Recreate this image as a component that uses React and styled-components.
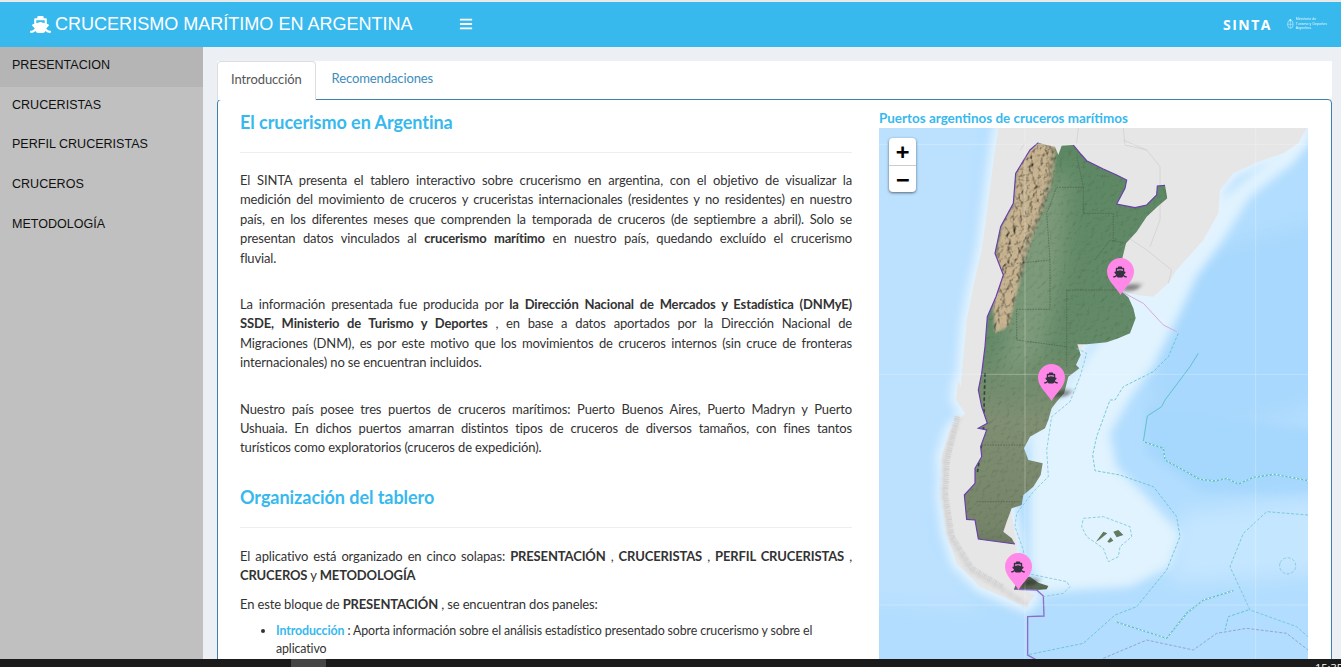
import React from 'react';
import styled, { createGlobalStyle } from 'styled-components';
import { FaShip, FaBars } from 'react-icons/fa';

const GlobalStyle = createGlobalStyle`
  html, body {
    margin: 0;
    padding: 0;
    height: 100%;
    overflow: hidden;
    background: #fff;
  }
  * { box-sizing: border-box; }
`;

const Page = styled.div`
  height: 667px;
  display: flex;
  flex-direction: column;
  padding-top: 2px;
  background: #e9e9e9;
  overflow: hidden;
`;

const Header = styled.header`
  height: 45px;
  flex: none;
  background: #37b9ee;
  color: #fff;
  display: flex;
  align-items: center;
  padding: 0 14px 1px 30px;
`;

const Brand = styled.div`
  display: flex;
  align-items: center;
  gap: 4px;
  font: 18.05px "Liberation Sans", Arial, sans-serif;
  svg { font-size: 21px; }
`;

const Burger = styled.span`
  display: flex;
  margin-left: 46px;
  font-size: 14px;
`;

const HeaderRight = styled.div`
  margin-left: auto;
  display: flex;
  align-items: center;
  gap: 15px;
`;

const Sinta = styled.span`
  font: bold 14px "Open Sans", sans-serif;
  letter-spacing: 1.5px;
`;

const Ministry = styled.div`
  display: flex;
  align-items: center;
  gap: 2px;
  width: 40px;
`;

const MinistryText = styled.div`
  font: 3.6px/4.5px "Liberation Sans", sans-serif;
  white-space: nowrap;
  opacity: 0.85;
`;

const Body = styled.div`
  flex: 1;
  min-height: 0;
  display: flex;
  overflow: hidden;
`;

const Sidebar = styled.nav`
  width: 203px;
  flex: none;
  background: #c0c0c0;
`;

const SideItem = styled.div`
  height: 39.6px;
  padding: 0 12px 3px;
  display: flex;
  align-items: center;
  background: ${p => (p.$active ? '#b5b5b5' : 'transparent')};
  color: #111;
  font: 12.55px "Liberation Sans", Arial, sans-serif;
`;

const Main = styled.main`
  flex: 1;
  min-width: 0;
  background: #ecf0f5;
  padding: 14px 9px 0 14px;
`;

const Tabs = styled.div`
  height: 38px;
  background: #fff;
  display: flex;
  font: 13px Lato, sans-serif;
  letter-spacing: -0.1px;
`;

const Tab = styled.div`
  padding: 0 13px 5px;
  margin-right: 2px;
  display: flex;
  align-items: center;
  position: relative;
  z-index: 1;
  height: ${p => (p.$active ? '39px' : '38px')};
  color: ${p => (p.$active ? '#555' : '#3c8dbc')};
  background: #fff;
  border: 1px solid ${p => (p.$active ? '#ddd' : 'transparent')};
  border-bottom: 0;
  border-radius: 4px 4px 0 0;
`;

const Panel = styled.section`
  height: 640px;
  background: #fff;
  border: 1px solid #3f7fae;
  border-radius: 4px 4px 0 0;
  padding: 0 23px 0 22px;
  display: grid;
  grid-template-columns: 612px 429px;
  column-gap: 27px;
  align-items: start;
  color: #333;
`;

const TextCol = styled.div`
  font: 13px/19.4px Lato, "Noto Sans", sans-serif;
  letter-spacing: -0.14px;
`;

const Heading = styled.h3`
  margin: 0;
  padding-top: ${p => p.$top}px;
  font: bold 18px/26px Lato, sans-serif;
  letter-spacing: -0.05px;
  color: #37b9ee;
`;

const Rule = styled.hr`
  margin: 17px 0 ${p => p.$after}px;
  border: 0;
  border-top: 1px solid #eee;
`;

const Para = styled.p`
  margin: 0 0 ${p => p.$after || 0}px;
`;

// the reference breaks its justified text at these exact places
const Line = styled.span`
  display: block;
  text-align: justify;
  text-align-last: justify;
`;

const Bullets = styled.ul`
  margin: 0;
  padding-left: 36px;
  font-size: 12.4px;
  line-height: 17.5px;
  letter-spacing: -0.12px;
`;

const Accent = styled.b`
  color: #37b9ee;
`;

const MapCol = styled.div`
  padding-top: 9px;
`;

const MapTitle = styled.div`
  font: bold 13.45px/19px Lato, sans-serif;
  color: #37b9ee;
`;

const MapBox = styled.div`
  position: relative;
  width: 429px;
  height: 531px;
  overflow: hidden;
  background: #b0dcfd;
  svg.base { display: block; }
`;

const ZoomBar = styled.div`
  position: absolute;
  left: 10px;
  top: 10px;
  width: 27px;
  border-radius: 4px;
  background: #fff;
  box-shadow: 0 1px 3px rgba(0, 0, 0, 0.55);
  overflow: hidden;
`;

const ZoomButton = styled.div`
  height: 27px;
  display: flex;
  align-items: center;
  justify-content: center;
  color: #000;
  font: bold 22px "DejaVu Sans Mono", monospace;
  & + & { border-top: 1px solid #ccc; }
`;

const Pin = styled.div`
  position: absolute;
  left: ${p => p.$x - 13.5}px;
  top: ${p => p.$y - 36.5}px;
  width: 27px;
  height: 37px;
`;

const PinShadow = styled.div`
  position: absolute;
  left: 15px;
  top: 26px;
  width: 18px;
  height: 7px;
  transform: skewX(-38deg);
  border-radius: 50%;
  background: rgba(30, 30, 30, 0.5);
  filter: blur(2px);
`;

const PinShape = styled.svg`
  position: absolute;
  left: 0;
  top: 0;
`;

const PinIcon = styled.span`
  position: absolute;
  left: 6.5px;
  top: 7px;
  display: flex;
  color: #33333f;
  font-size: 14px;
`;

const Taskbar = styled.footer`
  height: 8px;
  flex: none;
  background: #1b1b1b;
  display: flex;
  align-items: flex-start;
  padding-left: 291px;
  position: relative;
  overflow: hidden;
`;

const TaskButton = styled.div`
  width: 35px;
  height: 8px;
  background: #454545;
`;

const Clock = styled.span`
  position: absolute;
  left: 1315px;
  top: 3px;
  color: #fff;
  font: 11px/12px "Open Sans", sans-serif;
`;

const ARG = 'M505 128L530 135L555 140L565 165L575 137L610 135L635 165L650 182L700 207L740 225L770 240L765 265L740 312L795 323L830 315L860 285L862 258L885 256L892 295L862 320L830 350L800 395L768 430L757 475L755 575L775 592L790 625L797 655L780 700L745 715L710 727L650 733L622 733L632 765L618 795L628 805L595 830L585 870L582 880L560 905L545 925L535 960L525 985L480 1010L462 1045L475 1080L518 1090L512 1125L490 1160L460 1185L455 1215L425 1225L410 1265L400 1295L425 1315L435 1332L325 1317L315 1260L290 1258L283 1185L315 1150L315 1105L335 1070L332 1040L350 990L325 985L352 970L335 920L325 870L335 820L345 740L352 650L378 590L400 525L375 460L392 380L430 310L437 220L480 150Z';
const FUEGO = 'M432 1468L445 1435L480 1430L505 1448L535 1458L530 1468L500 1470Z';
const LAND = 'M385 84L372 170L345 380L335 450L310 560L290 660L272 860L265 840L258 900L285 940L240 990L215 1070L220 1140L215 1180L230 1300L260 1390L330 1460L420 1500L470 1520L495 1485L440 1460L440 1330L400 1100L600 800L745 570L800 585L850 590L895 550L920 510L1000 420L1045 340L1050 270L1090 220L1165 185L1240 160L1285 130L1310 84Z';
const SHELF = 'M1314 84L1314 120L1270 190L1140 290L1060 420L980 530L930 640L900 700L850 800L790 880L720 1000L740 1100L820 1180L930 1300L900 1400L780 1460L620 1470L520 1480L480 1400L480 1000L700 700L800 500Z';
const ANDES = 'M470 130H560L548 240L515 340L480 430L445 560L415 680L375 700L365 560L378 460L395 375L430 310L437 220Z';

const BORDER = 'M435 1332L325 1317L315 1260L290 1258L283 1185L315 1150L315 1105L335 1070L332 1040L350 990L325 985L352 970L335 920L325 870L335 820L345 740L352 650L378 590L400 525L375 460L392 380L430 310L437 220L480 150L505 128M610 135L635 165L650 182L700 207L740 225L770 240L765 265L740 312L795 323L830 315L860 285L862 258L885 256';
const SOUTH_LINE = 'M432 1468L500 1470L520 1488L522 1548L473 1550L473 1665L500 1680';
const PROVINCES = ['M560 262H640V340H730V420', 'M440 490L540 480V628H440V720', 'M590 570H755', 'M590 570V800', 'M440 720L590 740', 'M335 1035H470', 'M320 1205H450', 'M540 480L530 340L560 262', 'M640 262L620 165', 'M675 480L720 420L768 430'];
const DASHES = [
  { d: 'M1135 1530L1075 1550L1065 1590', c: '#57bcc6' },
  { d: 'M620 745L650 760L630 830L600 905L545 950L530 1050L535 1130L490 1175L440 1240L435 1280L460 1350L470 1420L590 1445L600 1460L580 1480L520 1490', c: '#7cc8d4' },
  { d: 'M925 700L895 770L850 815L760 860L735 900L720 900L680 1010L668 1065L675 1112L750 1125L850 1160L920 1250L930 1310L890 1410L800 1520L735 1545L640 1630L470 1665', c: '#62bfcc' },
  { d: 'M640 1255L700 1250L780 1280L785 1310L750 1340L745 1370L715 1385L700 1345L650 1310L635 1280Z', c: '#7cc8d4' },
  { d: 'M1314 1245L1190 1235L1120 1300L1080 1400L1140 1530L1280 1580L1314 1610', c: '#6cc3d0' },
  { d: 'M1230 1390A24 24 0 1 0 1276 1405A24 24 0 1 0 1230 1390', c: '#7cc8d4' },
  { d: 'M700 1675L830 1620L970 1650L1040 1600L1130 1585L1250 1600L1314 1650', c: '#8d9bbd' }
];
const WHITE_DASHES = [
  'M820 1025L880 1045L885 1080L990 1138L1035 1143L1070 1135L1105 1152L1150 1132L1215 1123L1314 1142',
  'M735 1565L890 1615L950 1540L1000 1500L1090 1472'
];

const gridLines = ['M465 84V1677', 'M1157 84V1677', 'M27 133H1314', 'M27 823H1314', 'M27 1515H1314'];

function MapArt() {
  return (
    <svg className="base" width="429" height="531" viewBox="27 84 1287 1593">
      <defs>
        <clipPath id="arg"><path d={ARG} /><path d={FUEGO} /></clipPath>
        <linearGradient id="green" x1="0" y1="0" x2="0" y2="1">
          <stop offset="0" stopColor="#5d8864" />
          <stop offset="0.45" stopColor="#648a68" />
          <stop offset="0.62" stopColor="#7f8f72" />
          <stop offset="0.85" stopColor="#768569" />
          <stop offset="1" stopColor="#56664f" />
        </linearGradient>
        <filter id="blur5" x="-20%" y="-20%" width="140%" height="140%"><feGaussianBlur stdDeviation="5" /></filter>
        <filter id="blur14" x="-20%" y="-20%" width="140%" height="140%"><feGaussianBlur stdDeviation="14" /></filter>
        <filter id="blur30" x="-30%" y="-30%" width="160%" height="160%"><feGaussianBlur stdDeviation="30" /></filter>
        <filter id="relief" x="0" y="0" width="100%" height="100%">
          <feTurbulence type="fractalNoise" baseFrequency="0.07" numOctaves="4" seed="11" />
          <feDiffuseLighting surfaceScale="6" diffuseConstant="1.2" lightingColor="#fff">
            <feDistantLight azimuth="225" elevation="60" />
          </feDiffuseLighting>
        </filter>
        <filter id="rough" x="0" y="0" width="100%" height="100%">
          <feTurbulence type="fractalNoise" baseFrequency="0.06" numOctaves="5" seed="3" />
          <feDiffuseLighting surfaceScale="11" diffuseConstant="1.25" lightingColor="#fff">
            <feDistantLight azimuth="200" elevation="55" />
          </feDiffuseLighting>
        </filter>
        <mask id="andesMask" maskUnits="userSpaceOnUse" x="27" y="84" width="1287" height="1593">
          <path d={ANDES} fill="#fff" filter="url(#blur5)" />
        </mask>
      </defs>

      <rect x="27" y="84" width="1287" height="1593" fill="#b2ddfe" />
      <path d="M800 500L1400 350V880L1000 1020L860 1000Z" fill="#a8d8fd" filter="url(#blur30)" />
      <path d="M830 920L1400 1000V1190L1000 1180L830 1060Z" fill="#a6d7fd" filter="url(#blur14)" />
      <path d="M930 1240L1400 1190V1420L900 1450Z" fill="#c5e6ff" filter="url(#blur30)" />
      <path d="M-60 20H360L300 700L220 1100L200 1300L340 1540L-60 1500Z" fill="#bbe1ff" filter="url(#blur30)" />
      <path d={SHELF} fill="#e0f3fe" filter="url(#blur14)" />
      <path d={LAND} fill="#e3f3fe" stroke="#e3f3fe" strokeWidth="36" filter="url(#blur14)" />
      <path d={LAND} fill="#e6e6e6" />

      <path d="M265 950L225 1080L220 1180L240 1310L300 1410L400 1470L470 1515" fill="none" stroke="#cbcbcb" strokeWidth="18" strokeDasharray="13 4 7 3" filter="url(#blur5)" opacity="0.6" />
      <path d="M262 950L232 1080L226 1180L246 1310L306 1405L400 1462" fill="none" stroke="#d2d2d2" strokeWidth="16" strokeDasharray="3 3 5 2 2 4" />
      <path d="M840 440L870 360L870 200L830 150L760 120M770 410L830 450L905 510L895 550" fill="none" stroke="#cdcdcd" strokeWidth="2" />
      <path d="M465 130L450 150M625 84L620 130M760 84L765 135L830 150" fill="none" stroke="#cdcdcd" strokeWidth="2" />

      <g clipPath="url(#arg)">
        <rect x="270" y="120" width="640" height="1360" fill="url(#green)" />
        <path d="M440 300L600 200L580 480L520 760L400 840Z" fill="#93a98a" opacity="0.55" filter="url(#blur30)" />
        <g mask="url(#andesMask)">
          <rect x="340" y="110" width="240" height="620" fill="#c8b491" />
          <rect x="340" y="110" width="240" height="620" filter="url(#rough)" style={{ mixBlendMode: 'multiply' }} />
        </g>
        <path d="M548 145L540 230L515 330L470 430L450 540" fill="none" stroke="#2f4a3a" strokeWidth="6" strokeDasharray="14 10" filter="url(#blur5)" />
        <path d="M345 820L340 1000L322 1120" fill="none" stroke="#2e4a38" strokeWidth="5" strokeDasharray="10 8" />
        <rect x="270" y="120" width="640" height="1360" filter="url(#relief)" style={{ mixBlendMode: 'multiply' }} opacity="0.4" />
        {PROVINCES.map(d => (
          <path key={d} d={d} fill="none" stroke="#4c5f4c" strokeWidth="2" strokeDasharray="5 3" />
        ))}
      </g>

      <path d={BORDER} fill="none" stroke="#6a3fa8" strokeWidth="3.5" />
      <path d={SOUTH_LINE} fill="none" stroke="#8d6ccb" strokeWidth="4" />
      <path d="M760 578L820 610L880 675L920 695" fill="none" stroke="#d9a9dc" strokeWidth="3" />
      <path d="M985 760L960 800L885 900L875 920L832 948L820 1025" fill="none" stroke="#62c1c8" strokeWidth="3" />

      {DASHES.map(l => (
        <path key={l.d} d={l.d} fill="none" stroke={l.c} strokeWidth="2.5" strokeDasharray="9 5" />
      ))}
      {WHITE_DASHES.map(d => (
        <g key={d}>
          <path d={d} fill="none" stroke="#5fbfca" strokeWidth="4" />
          <path d={d} fill="none" stroke="#fff" strokeWidth="3" strokeDasharray="5 7" />
        </g>
      ))}
      <path d="M678 1325L700 1295L712 1300L690 1318ZM712 1325L722 1312L730 1322L718 1328ZM730 1295L745 1290L760 1305L740 1312Z" fill="#5f7a5c" />

      {gridLines.map(d => (
        <path key={d} d={d} stroke="#fff" strokeOpacity="0.4" strokeWidth="2" />
      ))}
    </svg>
  );
}

function Marker({ x, y }) {
  return (
    <Pin $x={x} $y={y}>
      <PinShadow />
      <PinShape width="27" height="37" viewBox="0 0 27 37">
        <path d="M13.5 37C9 29 0 23 0 13.5A13.5 13.5 0 0 1 27 13.5C27 23 18 29 13.5 37Z" fill="#ff88e8" />
      </PinShape>
      <PinIcon><FaShip /></PinIcon>
    </Pin>
  );
}

export default function App() {
  return (
    <>
      <GlobalStyle />
      <Page>
        <Header>
          <Brand><FaShip /> CRUCERISMO MARÍTIMO EN ARGENTINA</Brand>
          <Burger><FaBars /></Burger>
          <HeaderRight>
            <Sinta>SINTA</Sinta>
            <Ministry>
              <svg width="11" height="16" viewBox="0 0 11 17">
                <ellipse cx="5.5" cy="9" rx="4.5" ry="6.5" fill="none" stroke="#fff" strokeOpacity="0.8" />
                <path d="M1 9H10M5.5 2V15" stroke="#fff" strokeOpacity="0.6" />
                <circle cx="5.5" cy="2" r="1.6" fill="#fff" fillOpacity="0.8" />
              </svg>
              <MinistryText>Ministerio de<br />Turismo y Deportes<br />Argentina</MinistryText>
            </Ministry>
          </HeaderRight>
        </Header>
        <Body>
          <Sidebar>
            <SideItem $active>PRESENTACION</SideItem>
            <SideItem>CRUCERISTAS</SideItem>
            <SideItem>PERFIL CRUCERISTAS</SideItem>
            <SideItem>CRUCEROS</SideItem>
            <SideItem>METODOLOGÍA</SideItem>
          </Sidebar>
          <Main>
            <Tabs>
              <Tab $active>Introducción</Tab>
              <Tab>Recomendaciones</Tab>
            </Tabs>
            <Panel>
              <TextCol>
                <Heading $top={9}>El crucerismo en Argentina</Heading>
                <Rule $after={18} />
                <Para $after={27}>
                  <Line>El SINTA presenta el tablero interactivo sobre crucerismo en argentina, con el objetivo de visualizar la</Line>
                  <Line>medición del movimiento de cruceros y cruceristas internacionales (residentes y no residentes) en nuestro</Line>
                  <Line>país, en los diferentes meses que comprenden la temporada de cruceros (de septiembre a abril). Solo se</Line>
                  <Line>presentan datos vinculados al <b>crucerismo marítimo</b> en nuestro país, quedando excluído el crucerismo</Line>
                  fluvial.
                </Para>
                <Para $after={27}>
                  <Line>La información presentada fue producida por <b>la Dirección Nacional de Mercados y Estadística (DNMyE)</b></Line>
                  <Line><b>SSDE, Ministerio de Turismo y Deportes</b> , en base a datos aportados por la Dirección Nacional de</Line>
                  <Line>Migraciones (DNM), es por este motivo que los movimientos de cruceros internos (sin cruce de fronteras</Line>
                  internacionales) no se encuentran incluidos.
                </Para>
                <Para>
                  <Line>Nuestro país posee tres puertos de cruceros marítimos: Puerto Buenos Aires, Puerto Madryn y Puerto</Line>
                  <Line>Ushuaia. En dichos puertos amarran distintos tipos de cruceros de diversos tamaños, con fines tantos</Line>
                  turísticos como exploratorios (cruceros de expedición).
                </Para>
                <Heading $top={26}>Organización del tablero</Heading>
                <Rule $after={19} />
                <Para $after={9}>
                  <Line>El aplicativo está organizado en cinco solapas: <b>PRESENTACIÓN</b> , <b>CRUCERISTAS</b> , <b>PERFIL CRUCERISTAS</b> ,</Line>
                  <b>CRUCEROS</b> y <b>METODOLOGÍA</b>
                </Para>
                <Para $after={8}>
                  En este bloque de <b>PRESENTACIÓN</b> , se encuentran dos paneles:
                </Para>
                <Bullets>
                  <li><Accent>Introducción</Accent> : Aporta información sobre el análisis estadístico presentado sobre crucerismo y sobre el aplicativo</li>
                </Bullets>
              </TextCol>
              <MapCol>
                <MapTitle>Puertos argentinos de cruceros marítimos</MapTitle>
                <MapBox>
                  <MapArt />
                  <ZoomBar>
                    <ZoomButton>+</ZoomButton>
                    <ZoomButton>−</ZoomButton>
                  </ZoomBar>
                  <Marker x={241} y={166} />
                  <Marker x={172} y={272} />
                  <Marker x={139} y={461} />
                </MapBox>
              </MapCol>
            </Panel>
          </Main>
        </Body>
        <Taskbar>
          <TaskButton />
          <Clock>15:35</Clock>
        </Taskbar>
      </Page>
    </>
  );
}
